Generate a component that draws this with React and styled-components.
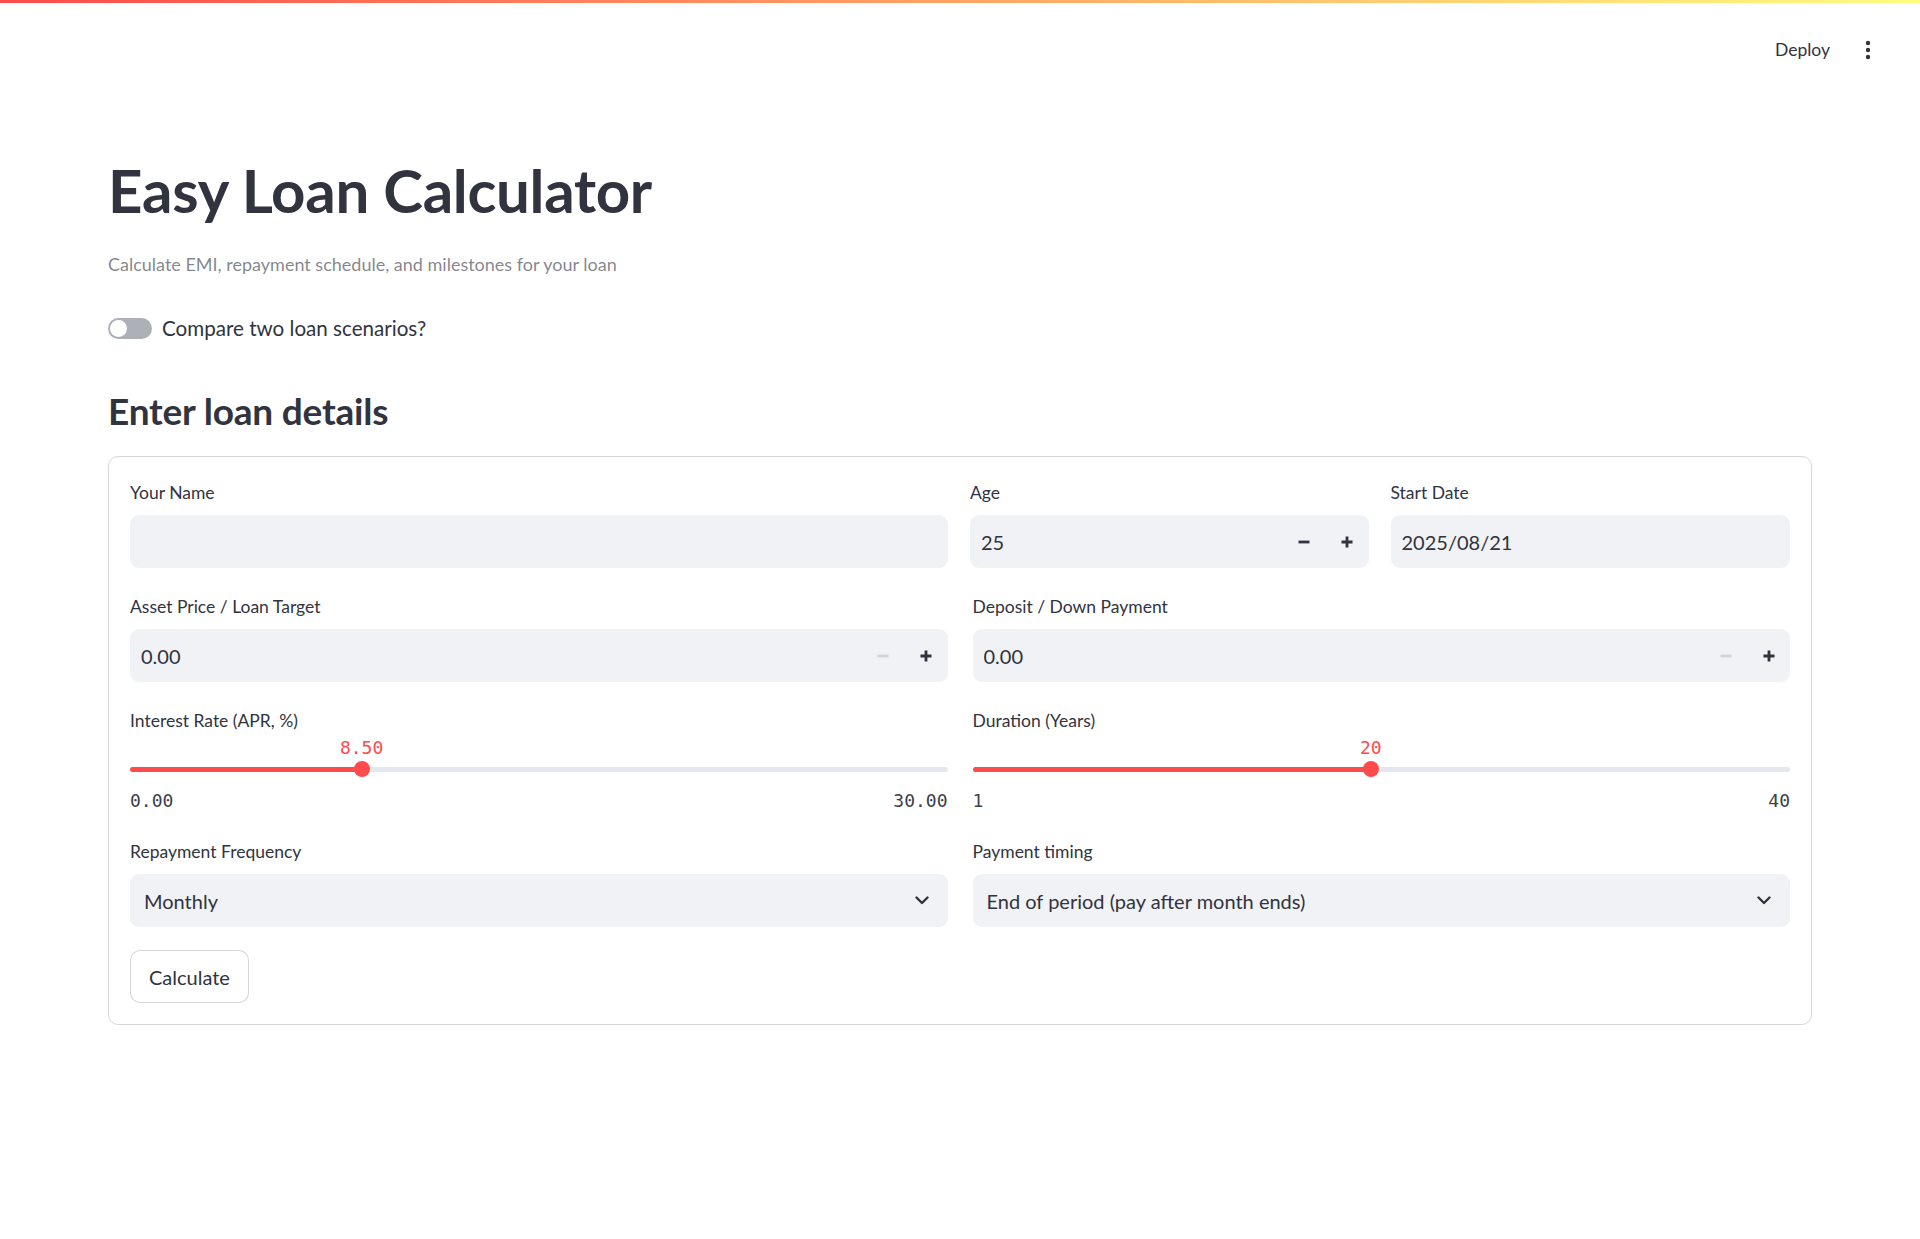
import React from 'react';
import styled, { createGlobalStyle } from 'styled-components';

const GlobalStyle = createGlobalStyle`
  html, body {
    margin: 0;
    padding: 0;
    background: #ffffff;
  }
  body {
    font-family: Lato, "Liberation Sans", sans-serif;
    color: #31333f;
  }
  * {
    box-sizing: border-box;
  }
`;

const TopStripe = styled.div`
  height: 3px;
  background: linear-gradient(90deg, #ff4b4b 0%, #fffd80 100%);
`;

const Header = styled.header`
  height: 93px;
  display: flex;
  align-items: center;
  justify-content: flex-end;
  gap: 30px;
  padding-right: 44px;
`;

const DeployLink = styled.span`
  font-size: 17.5px;
  color: #31333f;
`;

const MenuButton = styled.span`
  width: 16px;
  display: flex;
  justify-content: center;
  color: #31333f;
`;

const Main = styled.main`
  padding: 0 108px;
`;

const Title = styled.h1`
  margin: 59px 0 0;
  font-size: 60px;
  line-height: 70px;
  font-weight: 700;
  color: #31333f;
  letter-spacing: -0.3px;
`;

const Caption = styled.p`
  margin: 27px 0 0;
  font-size: 18px;
  line-height: 24px;
  color: rgba(49, 51, 63, 0.6);
`;

const ToggleRow = styled.label`
  margin-top: 40px;
  display: flex;
  align-items: center;
  gap: 10px;
  height: 24px;
  font-size: 20.6px;
  color: #31333f;
`;

const ToggleTrack = styled.span`
  width: 44px;
  height: 21px;
  border-radius: 11px;
  background: #aeb0b8;
  display: flex;
  align-items: center;
  padding-left: 2px;
`;

const ToggleKnob = styled.span`
  width: 17px;
  height: 17px;
  border-radius: 50%;
  background: #ffffff;
`;

const SubHeader = styled.h3`
  margin: 49px 0 0;
  font-size: 37px;
  line-height: 44px;
  font-weight: 700;
  color: #31333f;
  letter-spacing: -0.2px;
`;

const Card = styled.section`
  margin-top: 23px;
  border: 1px solid rgba(49, 51, 63, 0.2);
  border-radius: 10px;
  padding: 25px 21px 21px;
  display: flex;
  flex-direction: column;
  gap: 28px;
`;

const Row = styled.div`
  display: grid;
  grid-template-columns: ${(p) => p.$cols || '1fr 1fr'};
  column-gap: ${(p) => p.$gap || '25px'};
`;

const Field = styled.div`
  display: flex;
  flex-direction: column;
  min-width: 0;
`;

const Label = styled.div`
  font-size: 17.5px;
  line-height: 22px;
  margin-bottom: ${(p) => (p.$tight ? '0' : '11px')};
  color: #31333f;
`;

const InputBox = styled.div`
  height: 53px;
  background: #f0f2f6;
  border-radius: 9px;
  display: flex;
  align-items: center;
`;

const TextInput = styled.input`
  flex: 1;
  min-width: 0;
  height: 100%;
  border: none;
  outline: none;
  background: transparent;
  padding: 0 11px;
  font-family: Lato, "Liberation Sans", sans-serif;
  font-size: 20px;
  color: #31333f;
`;

const StepButton = styled.button`
  width: 43px;
  height: 100%;
  border: none;
  background: transparent;
  padding: 0;
  display: flex;
  align-items: center;
  justify-content: center;
  color: ${(p) => (p.$disabled ? '#d2d5dd' : '#31333f')};
`;

const SliderWrap = styled.div`
  position: relative;
  padding-top: 29px;
  padding-bottom: 1px;
`;

const SliderTrack = styled.div`
  position: relative;
  height: 16px;
  display: flex;
  align-items: center;
`;

const TrackRail = styled.div`
  width: 100%;
  height: 5px;
  border-radius: 3px;
  background: #e4e7ee;
  overflow: hidden;
`;

const TrackFill = styled.div`
  height: 100%;
  background: #ff4b4b;
`;

const Thumb = styled.div`
  position: absolute;
  top: 0;
  width: 16px;
  height: 16px;
  margin-left: -8px;
  border-radius: 50%;
  background: #ff4b4b;
`;

const ThumbValue = styled.div`
  position: absolute;
  top: 6px;
  transform: translateX(-50%);
  font-family: "DejaVu Sans Mono", "Liberation Mono", monospace;
  font-size: 18px;
  line-height: 20px;
  color: #ff4b4b;
  white-space: nowrap;
`;

const TickRow = styled.div`
  margin-top: 13px;
  display: flex;
  justify-content: space-between;
  font-family: "DejaVu Sans Mono", "Liberation Mono", monospace;
  font-size: 18px;
  line-height: 22px;
  color: #3d3f4a;
`;

const SelectBox = styled.div`
  height: 53px;
  background: #f0f2f6;
  border-radius: 9px;
  display: flex;
  align-items: center;
  justify-content: space-between;
  padding: 0 19px 0 14px;
  font-size: 20px;
  color: #31333f;
`;

const ButtonRow = styled.div`
  margin-top: -5px;
  display: flex;
`;

const CalcButton = styled.button`
  height: 53px;
  padding: 0 18px;
  border: 1px solid rgba(49, 51, 63, 0.2);
  border-radius: 10px;
  background: #ffffff;
  font-family: Lato, "Liberation Sans", sans-serif;
  font-size: 20px;
  color: #31333f;
`;

const MinusIcon = () => (
  <svg width="12" height="12" viewBox="0 0 12 12">
    <path d="M0.5 6h11" stroke="currentColor" strokeWidth="2.8" />
  </svg>
);

const PlusIcon = () => (
  <svg width="12" height="12" viewBox="0 0 12 12">
    <path d="M0.5 6h11M6 0.5v11" stroke="currentColor" strokeWidth="2.8" />
  </svg>
);

const Chevron = () => (
  <svg width="14" height="9" viewBox="0 0 14 9">
    <path d="M1.5 1.5L7 7l5.5-5.5" fill="none" stroke="#31333f" strokeWidth="2.4" strokeLinecap="round" strokeLinejoin="round" />
  </svg>
);

const DotsIcon = () => (
  <svg width="6" height="20" viewBox="0 0 6 20">
    <circle cx="3" cy="3" r="2.2" fill="currentColor" />
    <circle cx="3" cy="10" r="2.2" fill="currentColor" />
    <circle cx="3" cy="17" r="2.2" fill="currentColor" />
  </svg>
);

const NumberInput = ({ value, minDisabled }) => (
  <InputBox>
    <TextInput defaultValue={value} />
    <StepButton $disabled={minDisabled}>
      <MinusIcon />
    </StepButton>
    <StepButton>
      <PlusIcon />
    </StepButton>
  </InputBox>
);

const Slider = ({ label, value, min, max, format }) => {
  const pct = ((value - min) / (max - min)) * 100;
  return (
    <Field>
      <Label $tight>{label}</Label>
      <SliderWrap>
        <ThumbValue style={{ left: `${pct}%` }}>{format(value)}</ThumbValue>
        <SliderTrack>
          <TrackRail>
            <TrackFill style={{ width: `${pct}%` }} />
          </TrackRail>
          <Thumb style={{ left: `${pct}%` }} />
        </SliderTrack>
        <TickRow>
          <span>{format(min)}</span>
          <span>{format(max)}</span>
        </TickRow>
      </SliderWrap>
    </Field>
  );
};

export default function App() {
  const twoDp = (v) => v.toFixed(2);
  const whole = (v) => String(v);

  return (
    <>
      <GlobalStyle />
      <TopStripe />
      <Header>
        <DeployLink>Deploy</DeployLink>
        <MenuButton>
          <DotsIcon />
        </MenuButton>
      </Header>
      <Main>
        <Title>Easy Loan Calculator</Title>
        <Caption>Calculate EMI, repayment schedule, and milestones for your loan</Caption>
        <ToggleRow>
          <ToggleTrack>
            <ToggleKnob />
          </ToggleTrack>
          Compare two loan scenarios?
        </ToggleRow>
        <SubHeader>Enter loan details</SubHeader>

        <Card>
          <Row $cols="817fr 398fr 399fr" $gap="22px">
            <Field>
              <Label>Your Name</Label>
              <InputBox>
                <TextInput defaultValue="" />
              </InputBox>
            </Field>
            <Field>
              <Label>Age</Label>
              <NumberInput value="25" />
            </Field>
            <Field>
              <Label>Start Date</Label>
              <InputBox>
                <TextInput defaultValue="2025/08/21" />
              </InputBox>
            </Field>
          </Row>

          <Row>
            <Field>
              <Label>Asset Price / Loan Target</Label>
              <NumberInput value="0.00" minDisabled />
            </Field>
            <Field>
              <Label>Deposit / Down Payment</Label>
              <NumberInput value="0.00" minDisabled />
            </Field>
          </Row>

          <Row>
            <Slider label="Interest Rate (APR, %)" value={8.5} min={0} max={30} format={twoDp} />
            <Slider label="Duration (Years)" value={20} min={1} max={40} format={whole} />
          </Row>

          <Row>
            <Field>
              <Label>Repayment Frequency</Label>
              <SelectBox>
                <span>Monthly</span>
                <Chevron />
              </SelectBox>
            </Field>
            <Field>
              <Label>Payment timing</Label>
              <SelectBox>
                <span>End of period (pay after month ends)</span>
                <Chevron />
              </SelectBox>
            </Field>
          </Row>

          <ButtonRow>
            <CalcButton>Calculate</CalcButton>
          </ButtonRow>
        </Card>
      </Main>
    </>
  );
}
